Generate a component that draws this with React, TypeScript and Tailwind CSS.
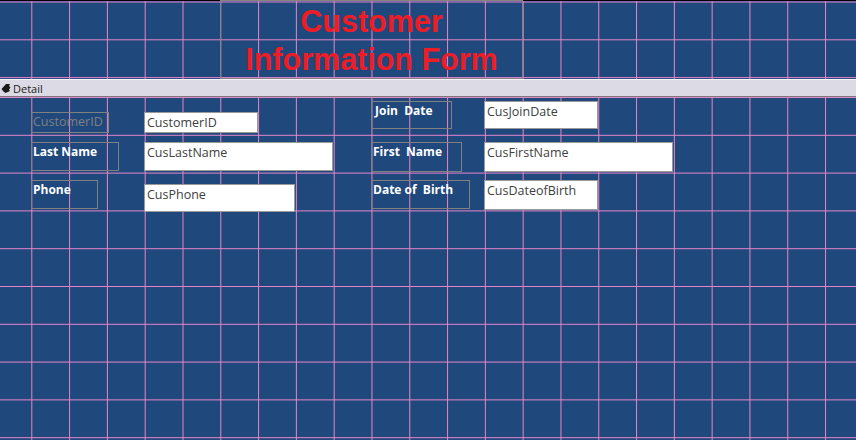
// Access-style form design view: Customer Information Form

const GRID =
  'bg-[#1f497d] bg-[linear-gradient(to_right,transparent_36.8px,#e884c8_36.8px),linear-gradient(to_bottom,transparent_36.8px,#e884c8_36.8px)] bg-[size:37.8px_37.8px]';

type Row = {
  label: string;
  field: string;
  labelW: string;
  labelH: string;
  fieldW: string;
  fieldH: string;
  gapTop: string;
  fieldTop?: string;
  labelPad?: string;
  dim?: boolean;
};

const LEFT: Row[] = [
  { label: 'CustomerID', field: 'CustomerID', labelW: 'w-[78px]', labelH: 'h-[21px]', fieldW: 'w-[114px]', fieldH: 'h-[21px]', gapTop: 'mt-[15px]', dim: true },
  { label: 'Last Name', field: 'CusLastName', labelW: 'w-[88px]', labelH: 'h-[29px]', fieldW: 'w-[189px]', fieldH: 'h-[29px]', gapTop: 'mt-[9px]' },
  { label: 'Phone', field: 'CusPhone', labelW: 'w-[67px]', labelH: 'h-[29px]', fieldW: 'w-[151px]', fieldH: 'h-[28px]', gapTop: 'mt-[9px]', fieldTop: 'mt-[4px]' },
];

const RIGHT: Row[] = [
  { label: 'Join  Date', field: 'CusJoinDate', labelW: 'w-[81px]', labelH: 'h-[28px]', fieldW: 'w-[114px]', fieldH: 'h-[28px]', gapTop: 'mt-[4px]', labelPad: 'pl-[3px]' },
  { label: 'First  Name', field: 'CusFirstName', labelW: 'w-[91px]', labelH: 'h-[30px]', fieldW: 'w-[189px]', fieldH: 'h-[30px]', gapTop: 'mt-[13px]' },
  { label: 'Date of  Birth', field: 'CusDateofBirth', labelW: 'w-[99px]', labelH: 'h-[29px]', fieldW: 'w-[114px]', fieldH: 'h-[30px]', gapTop: 'mt-[8px]' },
];

function ControlRow({ row }: { row: Row }) {
  return (
    <div className={`flex items-start ${row.gapTop}`}>
      <div className="w-[113px] shrink-0">
        <div
          className={`${row.labelW} ${row.labelH} ${row.labelPad ?? 'pl-[1px]'} border border-[#808080] whitespace-pre leading-[18px] ${
            row.dim ? 'text-[#808080] font-normal text-[12.5px]' : 'text-white font-bold text-[12px]'
          }`}
        >
          {row.label}
        </div>
      </div>
      <div
        className={`${row.fieldW} ${row.fieldH} ${row.fieldTop ?? ''} bg-white border border-[#9a9a9a] pl-[2px] pt-[1px] text-[12.5px] leading-[18px] text-[#404040]`}
      >
        {row.field}
      </div>
    </div>
  );
}

function SectionIcon() {
  return (
    <svg width="10" height="11" viewBox="0 0 10 11" className="shrink-0">
      <path d="M0.5 6 L5 1 L9 1 L8 3 L9.5 4.5 L8 6.5 L9 8 L4.5 10 L2.5 8.5 Z" fill="#1a1a1a" />
    </svg>
  );
}

export default function App() {
  return (
    <div className="w-[856px] h-[440px] overflow-hidden flex flex-col font-['Open_Sans','Noto_Sans',sans-serif] bg-[#1f497d]">
      {/* Form header */}
      <div className={`h-[79px] shrink-0 border-t border-black ${GRID} bg-[position:-5.5px_1.5px]`}>
        <div className="ml-[220px] -mt-[1px] w-[303px] h-[79px] border border-[#858585] pt-[1px] text-center font-['Liberation_Sans','Arial',sans-serif] font-bold text-[30.5px] leading-[38px] text-[#ee1c25]">
          Customer
          <br />
          Information Form
        </div>
      </div>

      {/* Section bar */}
      <div className="h-[1px] shrink-0 bg-[#f4f4f8]" />
      <div className="h-[17px] shrink-0 flex items-center gap-[2px] pl-[1px] bg-[#dcdae4] border-b border-[#7a7a7a] text-[11px] leading-none text-[#1a1a1a]">
        <SectionIcon />
        <span>Detail</span>
      </div>

      {/* Detail section */}
      <div className={`flex-1 flex ${GRID} bg-[position:-5.5px_1px]`}>
        <div className="w-[371px] shrink-0 pl-[31px] flex flex-col">
          {LEFT.map((r) => (
            <ControlRow key={r.field} row={r} />
          ))}
        </div>
        <div className="flex flex-col">
          {RIGHT.map((r) => (
            <ControlRow key={r.field} row={r} />
          ))}
        </div>
      </div>
    </div>
  );
}
